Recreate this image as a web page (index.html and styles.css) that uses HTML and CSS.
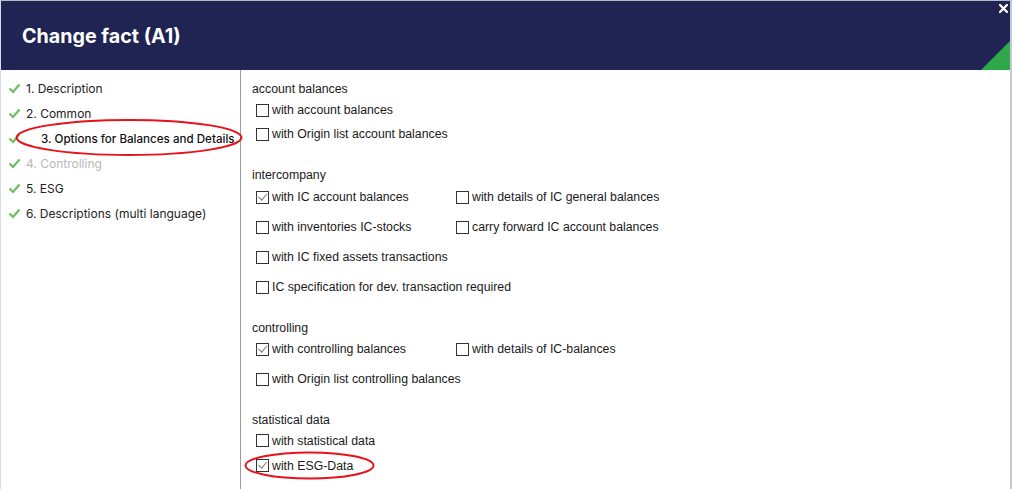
FILE: index.html
```html
<!DOCTYPE html>
<html>
<head>
<meta charset="utf-8">
<link rel="stylesheet" href="styles.css">
</head>
<body>
<div class="dialog">
  <header class="header">
    <h1 class="title">Change fact (A1)</h1>
    <svg class="close" width="9" height="9" viewBox="0 0 9 9"><path d="M1 1L8 8M8 1L1 8" stroke="#fff" stroke-width="2.2" stroke-linecap="square"/></svg>
    <svg class="corner" width="29" height="29" viewBox="0 0 29 29"><polygon points="0,29 29,0 29,29" fill="#2fa84b"/></svg>
  </header>
  <div class="body">
    <nav class="nav">
      <div class="step"><svg class="tick" width="13" height="11" viewBox="0 0 13 11"><path d="M1.5 5.5L5 9L11.5 1.5" fill="none" stroke="#6cbd5c" stroke-width="2.2"/></svg><span>1. Description</span></div>
      <div class="step"><svg class="tick" width="13" height="11" viewBox="0 0 13 11"><path d="M1.5 5.5L5 9L11.5 1.5" fill="none" stroke="#6cbd5c" stroke-width="2.2"/></svg><span>2. Common</span></div>
      <div class="step active"><svg class="tick" width="13" height="11" viewBox="0 0 13 11"><path d="M1.5 5.5L5 9L11.5 1.5" fill="none" stroke="#6cbd5c" stroke-width="2.2"/></svg><span>3. Options for Balances and Details</span></div>
      <div class="step disabled"><svg class="tick" width="13" height="11" viewBox="0 0 13 11"><path d="M1.5 5.5L5 9L11.5 1.5" fill="none" stroke="#6cbd5c" stroke-width="2.2"/></svg><span>4. Controlling</span></div>
      <div class="step"><svg class="tick" width="13" height="11" viewBox="0 0 13 11"><path d="M1.5 5.5L5 9L11.5 1.5" fill="none" stroke="#6cbd5c" stroke-width="2.2"/></svg><span>5. ESG</span></div>
      <div class="step"><svg class="tick" width="13" height="11" viewBox="0 0 13 11"><path d="M1.5 5.5L5 9L11.5 1.5" fill="none" stroke="#6cbd5c" stroke-width="2.2"/></svg><span>6. Descriptions (multi language)</span></div>
      <svg class="ring ring-nav" width="228" height="39" viewBox="0 0 228 39"><ellipse cx="114" cy="19.5" rx="112.5" ry="17.5" fill="none" stroke="#e8121b" stroke-width="2"/></svg>
    </nav>
    <main class="content">
      <section class="group first">
        <div class="group-title">account balances</div>
        <div class="rows tight">
          <label class="opt"><span class="box"></span>with account balances</label>
          <label class="opt"><span class="box"></span>with Origin list account balances</label>
        </div>
      </section>
      <section class="group">
        <div class="group-title">intercompany</div>
        <div class="rows grid ic">
          <label class="opt"><span class="box checked"></span>with IC account balances</label>
          <label class="opt"><span class="box"></span>with details of IC general balances</label>
          <label class="opt"><span class="box"></span>with inventories IC-stocks</label>
          <label class="opt"><span class="box"></span>carry forward IC account balances</label>
          <label class="opt"><span class="box"></span>with IC fixed assets transactions</label>
          <span></span>
          <label class="opt wide"><span class="box"></span>IC specification for dev. transaction required</label>
        </div>
      </section>
      <section class="group">
        <div class="group-title">controlling</div>
        <div class="rows grid">
          <label class="opt"><span class="box checked"></span>with controlling balances</label>
          <label class="opt"><span class="box"></span>with details of IC-balances</label>
          <label class="opt wide"><span class="box"></span>with Origin list controlling balances</label>
        </div>
      </section>
      <section class="group">
        <div class="group-title">statistical data</div>
        <div class="rows loose">
          <label class="opt"><span class="box"></span>with statistical data</label>
          <label class="opt esg"><span class="box checked"></span>with ESG-Data
            <svg class="ring ring-esg" width="131" height="29" viewBox="0 0 131 29"><ellipse cx="65.5" cy="14.5" rx="64" ry="13" fill="none" stroke="#e8121b" stroke-width="2"/></svg>
          </label>
        </div>
      </section>
    </main>
  </div>
</div>
</body>
</html>
```
FILE: styles.css
```css
* { box-sizing: border-box; margin: 0; padding: 0; }
html, body { width: 1012px; height: 489px; overflow: hidden; background: #fff; }
body { font-family: "Liberation Sans", Arial, sans-serif; color: #1a1a1a; }

.dialog {
  width: 1012px;
  height: 489px;
  display: flex;
  flex-direction: column;
  border-top: 1px solid #b4b8c8;
  border-left: 1px solid #d8dee8;
  border-right: 2px solid #c6c8d6;
  background: #fff;
}

.header {
  position: relative;
  height: 69px;
  flex: none;
  background: #1f2452;
  display: flex;
  align-items: center;
  padding-left: 21px;
}
.title {
  font-family: Inter, "Open Sans", sans-serif;
  font-size: 19.7px;
  font-weight: 700;
  color: #fff;
  margin-top: 1px;
}
.close { position: absolute; top: 3px; right: 2px; }
.corner { position: absolute; right: 0; bottom: 0; display: block; }

.body { flex: 1; display: flex; min-height: 0; }

.nav {
  position: relative;
  width: 240px;
  flex: none;
  border-right: 1px solid #9a9a9a;
  padding: 6px 0 0 7px;
  font-family: Inter, "Open Sans", sans-serif;
  font-size: 12px;
  color: #222;
  white-space: nowrap;
}
.step { display: flex; align-items: center; height: 25px; }
.tick { flex: none; margin-right: 5px; }
.step.active span { margin-left: 15px; font-weight: 500; font-size: 11.6px; color: #111; }
.step.disabled span { color: #b8b8b8; }
.ring { position: absolute; display: block; pointer-events: none; }
.ring-nav { left: 14px; top: 48px; }

.content {
  flex: 1;
  padding: 8px 0 0 11px;
  font-size: 12.3px;
  color: #1a1a1a;
}
.group + .group { margin-top: 19px; }
.group-title { height: 19px; line-height: 21px; }
.group.first .group-title { height: 20px; line-height: 22px; }
.rows { padding-left: 4px; }
.rows.tight .opt { height: 24px; }
.rows.loose { display: flex; flex-direction: column; margin-top: -1px; }
.rows.loose .opt { height: 25px; }
.rows.grid {
  display: grid;
  grid-template-columns: 200px 1fr;
  grid-auto-rows: 24px;
  row-gap: 6px;
}
.rows.grid.ic { padding-top: 1px; }
.opt { display: flex; align-items: center; white-space: nowrap; position: relative; }
.opt.wide { grid-column: 1 / span 2; }
.box {
  flex: none;
  width: 13px;
  height: 13px;
  border: 1px solid #333;
  background: #fff;
  margin-right: 3px;
  position: relative;
}
.box.checked::after {
  content: "";
  position: absolute;
  left: 3px;
  top: 0px;
  width: 4px;
  height: 7px;
  border-right: 1.3px solid #777;
  border-bottom: 1.3px solid #777;
  transform: rotate(40deg);
}
.ring-esg { left: -12px; top: -2px; }
```
